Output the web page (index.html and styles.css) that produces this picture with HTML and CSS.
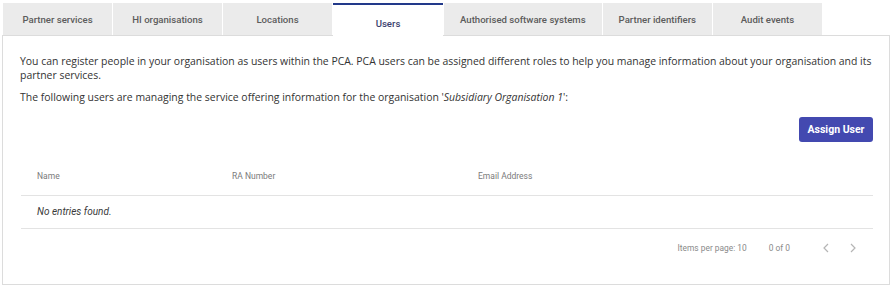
FILE: index.html
```html
<!DOCTYPE html>
<html>
<head>
  <title>Organisation Users</title>
  <link rel="stylesheet" href="styles.css">
</head>
<body>
  <div class="page">
    <div class="tabs">
      <div class="tab">Partner services</div>
      <div class="tab">HI organisations</div>
      <div class="tab">Locations</div>
      <div class="tab active">Users</div>
      <div class="tab">Authorised software systems</div>
      <div class="tab">Partner identifiers</div>
      <div class="tab">Audit events</div>
    </div>

    <div class="panel">
      <p class="intro">You can register people in your organisation as users within the PCA. PCA users can be assigned different roles to help you manage information about your organisation and its partner services.</p>
      <p class="intro">The following users are managing the service offering information for the organisation '<em>Subsidiary Organisation 1</em>':</p>

      <div class="actions">
        <button class="btn">Assign User</button>
      </div>

      <table class="users">
        <thead>
          <tr>
            <th class="col-name">Name</th>
            <th class="col-ra">RA Number</th>
            <th>Email Address</th>
          </tr>
        </thead>
        <tbody>
          <tr>
            <td colspan="3" class="empty">No entries found.</td>
          </tr>
        </tbody>
      </table>

      <!-- Paginator -->
      <div class="paginator">
        <span class="page-size">Items per page: 10</span>
        <span class="range">0 of 0</span>
        <span class="nav">
          <svg width="6" height="10" viewBox="0 0 6 10"><path d="M5 1 L1 5 L5 9" fill="none" stroke="#b5b5b5" stroke-width="1.2"/></svg>
        </span>
        <span class="nav">
          <svg width="6" height="10" viewBox="0 0 6 10"><path d="M1 1 L5 5 L1 9" fill="none" stroke="#b5b5b5" stroke-width="1.2"/></svg>
        </span>
      </div>
    </div>
  </div>
</body>
</html>
```

FILE: styles.css
```css
/* Reset styles */
* {
  box-sizing: border-box;
  margin: 0;
  padding: 0;
}

body {
  background-color: #fff;
  font-family: Roboto, Arial, sans-serif;
  color: #333;
}

.page {
  padding: 3px 3px 3px 2px;
  width: 893px;
}

/* Tab bar */
.tabs {
  display: flex;
  gap: 1px;
  margin-left: 1px;
}

.tab {
  min-width: 109px;
  height: 32px;
  padding: 0 16px;
  background-color: #ebebeb;
  color: #5c5c5c;
  font-size: 9.6px;
  font-weight: 500;
  display: flex;
  align-items: center;
  justify-content: center;
}

.tab.active {
  min-width: 110px;
  background-color: #fff;
  border-top: 2px solid #22398a;
  color: #3b3f6e;
  height: 33px;
  margin-bottom: -1px;
  padding-top: 5px;
  position: relative;
}

/* Panel */
.panel {
  border: 1px solid #dcdcdc;
  padding: 18px 16px 17px 17px;
}

.intro {
  font-family: "Open Sans", Arial, sans-serif;
  font-size: 10.45px;
  line-height: 14px;
  color: #333;
  margin-bottom: 8px;
  margin-right: -6px;
}

.intro em {
  font-style: italic;
}

.actions {
  display: flex;
  justify-content: flex-end;
  margin-top: 13px;
}

.btn {
  background-color: #4349b0;
  color: #fff;
  border: none;
  border-radius: 3px;
  font-family: Roboto, Arial, sans-serif;
  font-size: 10.5px;
  font-weight: 700;
  width: 74px;
  height: 25px;
}

/* Users table */
.users {
  width: 852px;
  margin-top: 15px;
  margin-left: 1px;
  border-collapse: collapse;
}

.users th {
  text-align: left;
  font-weight: 400;
  font-size: 8.5px;
  color: #7a7a7a;
  height: 38px;
  padding-left: 16px;
  border-bottom: 1px solid #e3e3e3;
}

.col-name {
  width: 195px;
}

.col-ra {
  width: 246px;
}

.empty {
  font-style: italic;
  font-size: 10px;
  color: #3a3a3a;
  height: 33px;
  padding-left: 16px;
  border-bottom: 1px solid #e3e3e3;
}

/* Paginator */
.paginator {
  display: flex;
  justify-content: flex-end;
  align-items: center;
  height: 38px;
  font-size: 8.4px;
  color: #8a8a8a;
  padding-right: 17px;
}

.page-size {
  margin-right: 22px;
}

.range {
  margin-right: 33px;
}

.nav {
  display: flex;
  width: 6px;
  margin-right: 21px;
}

.nav:last-child {
  margin-right: 0;
}
```
